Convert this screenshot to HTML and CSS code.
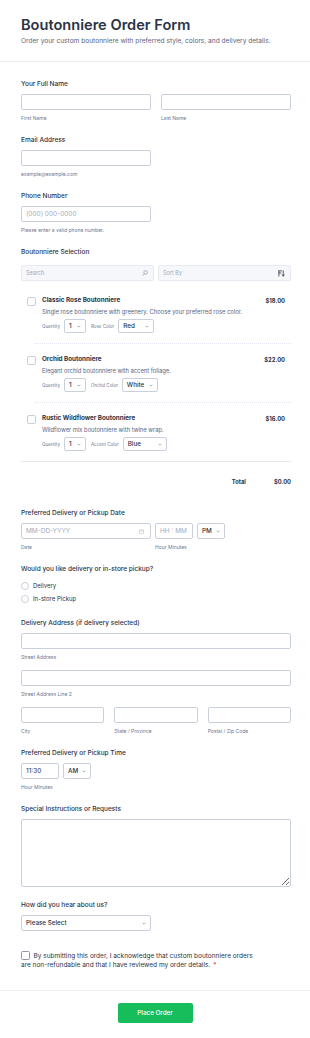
FILE: index.html
```html
<!DOCTYPE html>
<html lang="en">
<head>
  <meta charset="UTF-8" />
  <meta name="viewport" content="width=device-width, initial-scale=1" />
  <title>Boutonniere Order Form</title>
  <link rel="stylesheet" href="styles.css">
</head>
<body>
  <header class="form-header">
    <h1>Boutonniere Order Form</h1>
    <p>Order your custom boutonniere with preferred style, colors, and delivery details.</p>
  </header>

  <main class="form-body">
    <div class="field">
      <label class="label">Your Full Name</label>
      <div class="cols-2">
        <div class="sub"><input class="input" type="text"><span class="hint">First Name</span></div>
        <div class="sub"><input class="input" type="text"><span class="hint">Last Name</span></div>
      </div>
    </div>

    <div class="field">
      <label class="label">Email Address</label>
      <div class="sub half"><input class="input" type="email"><span class="hint">example@example.com</span></div>
    </div>

    <div class="field">
      <label class="label">Phone Number</label>
      <div class="sub half"><input class="input" type="tel" placeholder="(000) 000-0000"><span class="hint">Please enter a valid phone number.</span></div>
    </div>

    <!-- Product list with quantity + colour options -->
    <div class="field">
      <label class="label">Boutonniere Selection</label>
      <div class="toolbar">
        <div class="tool-box">
          <span>Search</span>
          <svg width="6" height="6" viewBox="0 0 8 8"><circle cx="4.8" cy="3.2" r="2.4" fill="none" stroke="#8a91a3" stroke-width="0.9"/><path d="M3.1 4.9L1 7" stroke="#8a91a3" stroke-width="0.9" stroke-linecap="round"/></svg>
        </div>
        <div class="tool-box">
          <span>Sort By</span>
          <svg width="7" height="7" viewBox="0 0 8 8"><path d="M1 1v6M1 1h3.2M1 3.4h2.2M6 1v6M4.6 5.4L6 6.8 7.4 5.4" fill="none" stroke="#2c3345" stroke-width="0.9" stroke-linecap="round"/></svg>
        </div>
      </div>

      <div class="products">
        <div class="product">
          <span class="check"></span>
          <div class="product-info">
            <div class="product-top"><h3>Classic Rose Boutonniere</h3><span class="price">$18.00</span></div>
            <p class="desc">Single rose boutonniere with greenery. Choose your preferred rose color.</p>
            <div class="options">
              <span class="opt-label">Quantity</span>
              <div class="select sel-qty"><span>1</span><svg width="4" height="3" viewBox="0 0 6 4"><path d="M1 1l2 2 2-2" fill="none" stroke="#6b7387" stroke-width="0.9"/></svg></div>
              <span class="opt-label">Rose Color</span>
              <div class="select sel-color"><span>Red</span><svg width="4" height="3" viewBox="0 0 6 4"><path d="M1 1l2 2 2-2" fill="none" stroke="#6b7387" stroke-width="0.9"/></svg></div>
            </div>
          </div>
        </div>
        <hr class="product-sep">
        <div class="product">
          <span class="check"></span>
          <div class="product-info">
            <div class="product-top"><h3>Orchid Boutonniere</h3><span class="price">$22.00</span></div>
            <p class="desc">Elegant orchid boutonniere with accent foliage.</p>
            <div class="options">
              <span class="opt-label">Quantity</span>
              <div class="select sel-qty"><span>1</span><svg width="4" height="3" viewBox="0 0 6 4"><path d="M1 1l2 2 2-2" fill="none" stroke="#6b7387" stroke-width="0.9"/></svg></div>
              <span class="opt-label">Orchid Color</span>
              <div class="select sel-color"><span>White</span><svg width="4" height="3" viewBox="0 0 6 4"><path d="M1 1l2 2 2-2" fill="none" stroke="#6b7387" stroke-width="0.9"/></svg></div>
            </div>
          </div>
        </div>
        <hr class="product-sep">
        <div class="product">
          <span class="check"></span>
          <div class="product-info">
            <div class="product-top"><h3>Rustic Wildflower Boutonniere</h3><span class="price">$16.00</span></div>
            <p class="desc">Wildflower mix boutonniere with twine wrap.</p>
            <div class="options">
              <span class="opt-label">Quantity</span>
              <div class="select sel-qty"><span>1</span><svg width="4" height="3" viewBox="0 0 6 4"><path d="M1 1l2 2 2-2" fill="none" stroke="#6b7387" stroke-width="0.9"/></svg></div>
              <span class="opt-label">Accent Color</span>
              <div class="select sel-wide"><span>Blue</span><svg width="4" height="3" viewBox="0 0 6 4"><path d="M1 1l2 2 2-2" fill="none" stroke="#6b7387" stroke-width="0.9"/></svg></div>
            </div>
          </div>
        </div>
      </div>

      <div class="total"><span>Total</span><span>$0.00</span></div>
    </div>

    <div class="field">
      <label class="label">Preferred Delivery or Pickup Date</label>
      <div class="date-row">
        <div class="sub half">
          <div class="input with-icon">
            <span class="ph">MM-DD-YYYY</span>
            <svg width="5" height="5" viewBox="0 0 6 6"><rect x="0.5" y="1" width="5" height="4.5" rx="0.6" fill="none" stroke="#b7bdcb" stroke-width="0.7"/><path d="M0.5 2.4h5" stroke="#b7bdcb" stroke-width="0.7"/></svg>
          </div>
          <span class="hint">Date</span>
        </div>
        <div class="sub">
          <div class="time-pair">
            <input class="input time" type="text" placeholder="HH : MM">
            <div class="select sel-ampm"><span>PM</span><svg width="4" height="3" viewBox="0 0 6 4"><path d="M1 1l2 2 2-2" fill="none" stroke="#6b7387" stroke-width="0.9"/></svg></div>
          </div>
          <span class="hint">Hour Minutes</span>
        </div>
      </div>
    </div>

    <div class="field">
      <label class="label">Would you like delivery or in-store pickup?</label>
      <div class="radios">
        <label class="radio"><span class="circle"></span>Delivery</label>
        <label class="radio"><span class="circle"></span>In-store Pickup</label>
      </div>
    </div>

    <div class="field">
      <label class="label">Delivery Address (if delivery selected)</label>
      <div class="address">
        <div class="sub"><input class="input" type="text"><span class="hint">Street Address</span></div>
        <div class="sub"><input class="input" type="text"><span class="hint">Street Address Line 2</span></div>
        <div class="cols-3">
          <div class="sub"><input class="input" type="text"><span class="hint">City</span></div>
          <div class="sub"><input class="input" type="text"><span class="hint">State / Province</span></div>
          <div class="sub"><input class="input" type="text"><span class="hint">Postal / Zip Code</span></div>
        </div>
      </div>
    </div>

    <div class="field">
      <label class="label">Preferred Delivery or Pickup Time</label>
      <div class="sub">
        <div class="time-pair">
          <input class="input time filled" type="text" value="11:30">
          <div class="select sel-ampm"><span>AM</span><svg width="4" height="3" viewBox="0 0 6 4"><path d="M1 1l2 2 2-2" fill="none" stroke="#6b7387" stroke-width="0.9"/></svg></div>
        </div>
        <span class="hint">Hour Minutes</span>
      </div>
    </div>

    <div class="field">
      <label class="label">Special Instructions or Requests</label>
      <textarea class="input textarea"></textarea>
    </div>

    <div class="field">
      <label class="label">How did you hear about us?</label>
      <div class="select sel-full"><span>Please Select</span><svg width="4" height="3" viewBox="0 0 6 4"><path d="M1 1l2 2 2-2" fill="none" stroke="#6b7387" stroke-width="0.9"/></svg></div>
    </div>

    <p class="terms"><span class="term-box"></span>By submitting this order, I acknowledge that custom boutonniere orders are non-refundable and that I have reviewed my order details.<span class="req">*</span></p>
  </main>

  <footer class="form-footer">
    <button class="submit" type="submit">Place Order</button>
  </footer>
</body>
</html>
```

FILE: styles.css
```css
* {
  box-sizing: border-box;
}
body {
  margin: 0;
  font-family: Inter, "Noto Sans", sans-serif;
  color: #2c3345;
  background: #fff;
}
.form-header {
  padding: 16px 19px 15px 21px;
  border-bottom: 1px solid #eceef3;
}
.form-header h1 {
  margin: 0 0 2px;
  font-size: 14.6px;
  line-height: 18px;
  font-weight: 600;
}
.form-header p {
  margin: 0;
  font-size: 6.6px;
  line-height: 10px;
  color: #57647e;
}
.form-body {
  padding: 17px 19px 19px 21px;
}
.field {
  margin-bottom: 13px;
}
.label {
  display: block;
  font-size: 6.5px;
  line-height: 10px;
  font-weight: 500;
  margin-bottom: 5px;
}
.sub {
  display: flex;
  flex-direction: column;
}
.half {
  width: 130px;
}
.hint {
  margin-top: 4px;
  font-size: 5px;
  line-height: 8px;
  color: #6f7890;
}
.input {
  width: 100%;
  height: 16px;
  border: 1px solid #c9cfdc;
  border-radius: 2px;
  background: #fff;
  padding: 0 4px;
  font-family: inherit;
  font-size: 6.5px;
  color: #2c3345;
  outline: none;
}
.input::placeholder,
.ph {
  color: #a5abbb;
}
.cols-2 {
  display: grid;
  grid-template-columns: 1fr 1fr;
  gap: 10px;
}
.cols-3 {
  display: grid;
  grid-template-columns: 1fr 1fr 1fr;
  gap: 10px;
}

/* search + sort bar */
.toolbar {
  display: flex;
  gap: 4px;
  margin-top: 8px;
}
.tool-box {
  flex: 1;
  height: 16px;
  display: flex;
  align-items: center;
  justify-content: space-between;
  padding: 0 5px 0 4px;
  background: #f6f7fb;
  border: 1px solid #e8eaf1;
  border-radius: 2px;
  font-size: 5.5px;
  color: #a3a9b9;
}

/* products */
.products {
  margin-top: 4px;
  border-bottom: 1px solid #e6e8ee;
}
.product {
  display: flex;
  gap: 6px;
  padding: 11px 6px 10px;
}
.check {
  flex: none;
  width: 9px;
  height: 9px;
  margin-top: 0.5px;
  border: 1px solid #c9cfdc;
  border-radius: 2px;
  background: #fff;
}
.product-info {
  flex: 1;
}
.product-top {
  display: flex;
  justify-content: space-between;
}
.product h3 {
  margin: 0;
  font-size: 6.3px;
  line-height: 9px;
  font-weight: 700;
}
.price {
  font-size: 5.8px;
  line-height: 9px;
  font-weight: 700;
}
.desc {
  margin: 2px 0 0;
  font-size: 5.8px;
  line-height: 9px;
  color: #57647e;
}
.options {
  display: flex;
  align-items: center;
  margin-top: 3px;
}
.opt-label {
  font-size: 4.5px;
  color: #6f7890;
  margin-right: 4px;
}
.select + .opt-label {
  margin-left: 5px;
}
.select {
  height: 14px;
  display: flex;
  align-items: center;
  justify-content: space-between;
  padding: 0 4px;
  border: 1px solid #c9cfdc;
  border-radius: 2px;
  background: #fff;
  font-size: 6.3px;
  font-weight: 500;
  color: #2c3345;
}
.sel-qty { width: 22px; }
.sel-color { width: 36px; }
.sel-wide { width: 44px; }
.product-sep {
  margin: 0 0 0 14px;
  border: 0;
  border-top: 1px dotted #e3e6ee;
}
.total {
  display: flex;
  justify-content: flex-end;
  gap: 28px;
  padding: 15px 0 9px;
  font-size: 5.8px;
  line-height: 9px;
  font-weight: 700;
}

/* date / time */
.date-row {
  display: flex;
  gap: 4px;
}
.with-icon {
  display: flex;
  align-items: center;
  justify-content: space-between;
  padding-right: 6px;
}
.time-pair {
  display: flex;
  gap: 4px;
}
.time {
  width: 38px;
}
.filled {
  color: #2c3345;
}
.sel-ampm {
  width: 28px;
  height: 16px;
}

.radios {
  margin-top: 2px;
}
.radio {
  display: flex;
  align-items: center;
  gap: 4px;
  font-size: 6px;
  line-height: 13px;
  color: #2c3345;
}
.circle {
  width: 8px;
  height: 8px;
  border: 1px solid #c9cfdc;
  border-radius: 50%;
}

.address {
  display: flex;
  flex-direction: column;
  gap: 9px;
}

.textarea {
  display: block;
  height: 68px;
  resize: vertical;
}
.sel-full {
  width: 130px;
  height: 16px;
}

.terms {
  margin: 20px 0 0;
  padding-right: 30px;
  font-size: 6.5px;
  line-height: 9.6px;
  color: #2c3345;
}
.term-box {
  display: inline-block;
  width: 8.5px;
  height: 8.5px;
  margin-right: 4px;
  vertical-align: -2px;
  border: 1px solid #8f96a8;
  border-radius: 1.5px;
}
.req {
  margin-left: 3px;
  color: #f23a3c;
}

.form-footer {
  border-top: 1px solid #eceef3;
  padding: 12px 0 17px;
  display: flex;
  justify-content: center;
}
.submit {
  width: 75px;
  height: 20px;
  border: none;
  border-radius: 2px;
  background: #18bd5b;
  color: #fff;
  font-family: inherit;
  font-size: 6.3px;
  font-weight: 500;
  cursor: pointer;
}
```
